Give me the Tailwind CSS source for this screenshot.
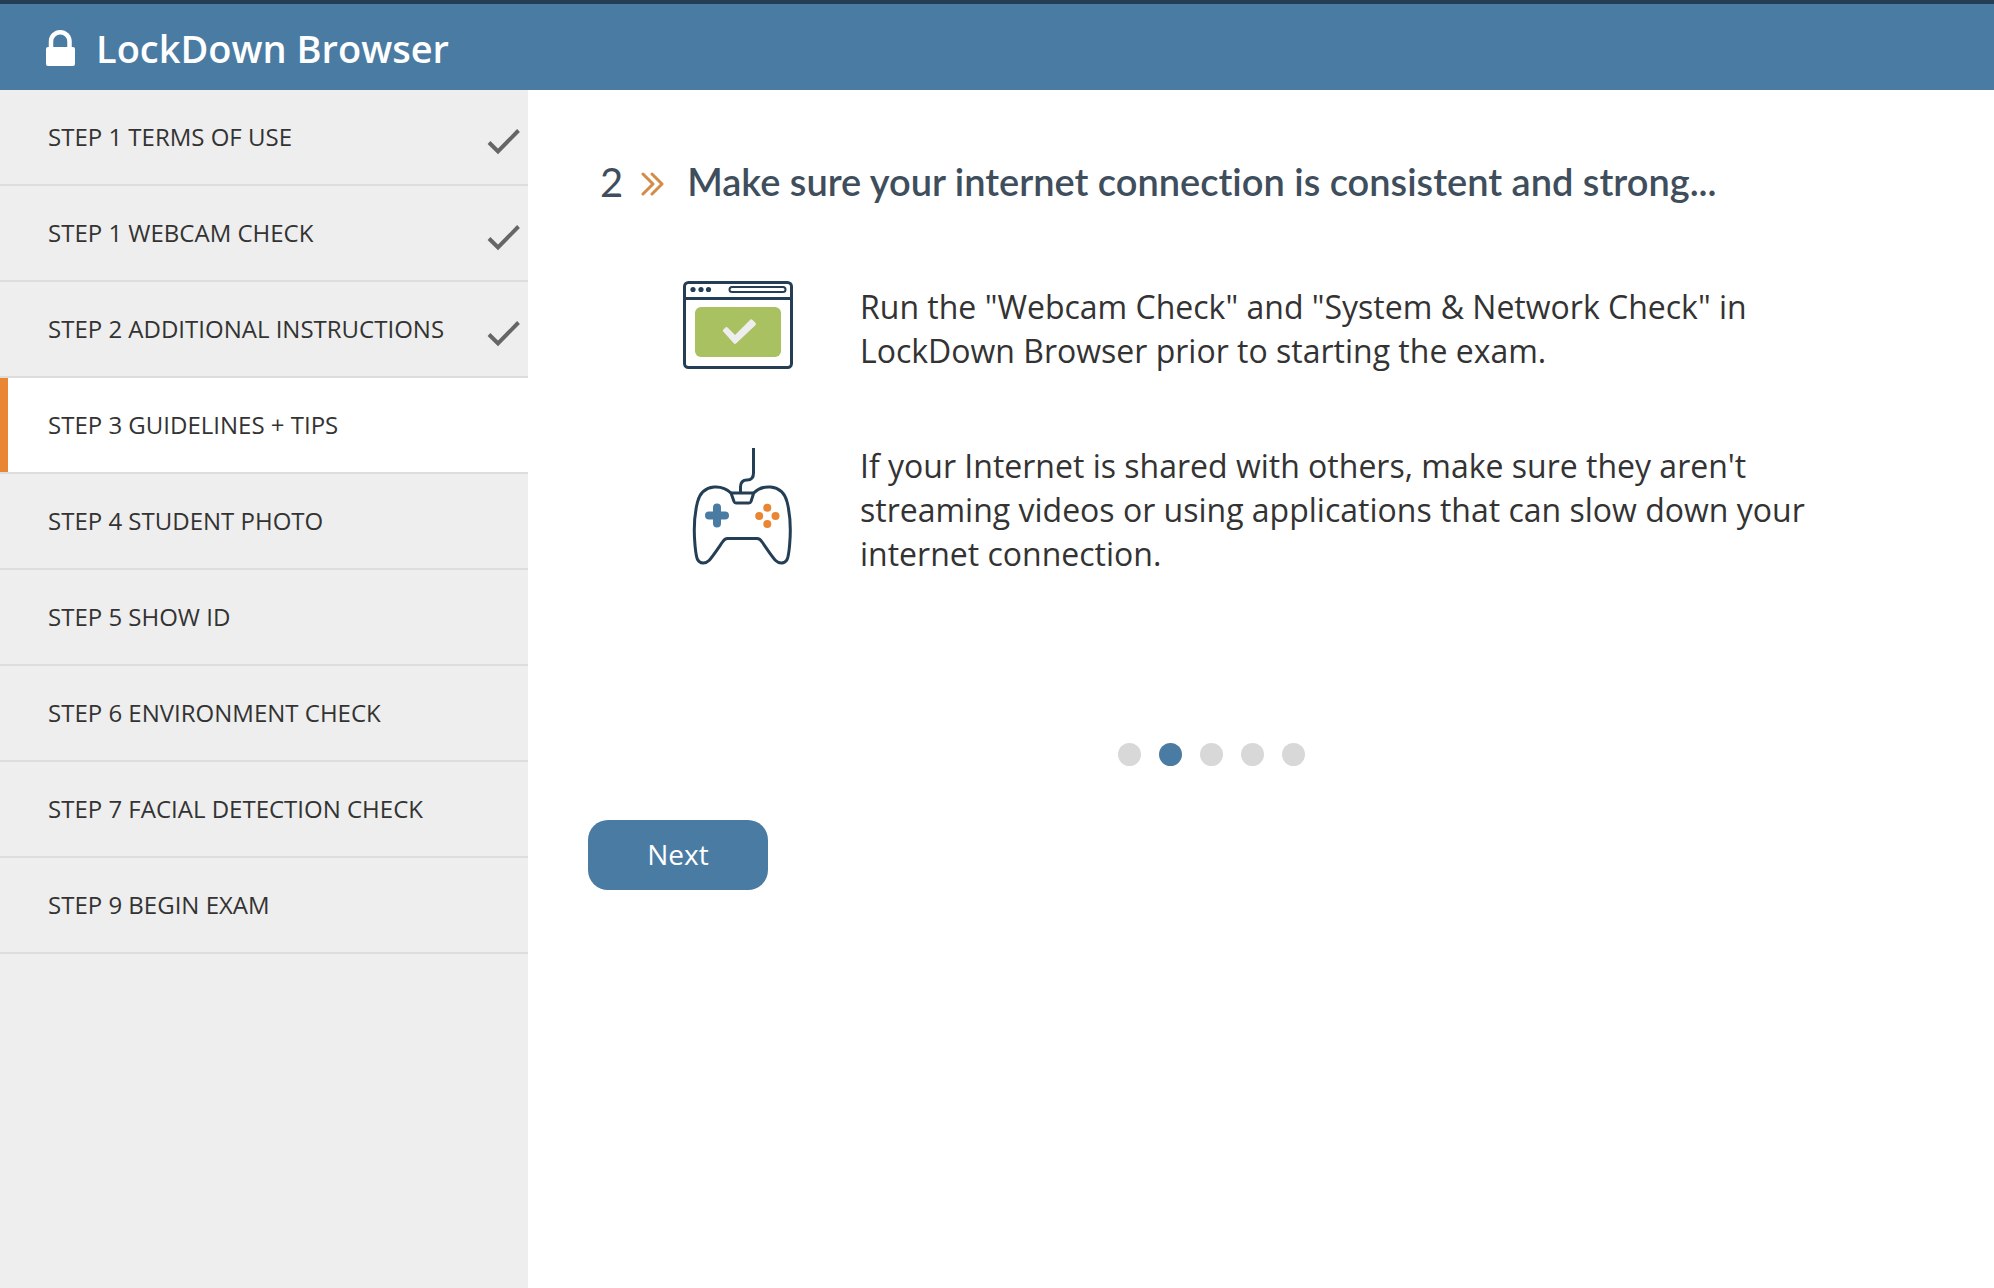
<!DOCTYPE html>
<html lang="en">
<head>
  <meta charset="UTF-8" />
  <meta name="viewport" content="width=device-width, initial-scale=1.0" />
  <title>LockDown Browser | Guidelines + Tips</title>
  <script src="https://cdn.jsdelivr.net/npm/@tailwindcss/browser@4"></script>
</head>
<body class="min-h-screen flex flex-col bg-white font-['Open_Sans',sans-serif] text-[#333333]">

  <!-- Header -->
  <header class="flex items-center gap-5 h-[90px] pl-[46px] pt-0.5 border-t-4 border-[#243f55] bg-[#4a7ba3] text-white">
    <svg class="w-[30px] h-9" viewBox="0 0 30 36" fill="none" aria-hidden="true">
      <path d="M5 17V11.500a9.200 9.200 0 0 1 18.500 0V17" stroke="currentColor" stroke-width="4.500" />
      <rect x="0" y="17" width="29" height="19" rx="2" fill="currentColor" />
    </svg>
    <span class="text-[38px] leading-[48px] font-semibold">LockDown Browser</span>
  </header>

  <div class="flex flex-1">

    <!-- Steps -->
    <nav class="w-[528px] shrink-0 bg-[#eeeeee]" aria-label="Steps">
      <ul class="text-[24px] leading-8">
        <li class="border-b-2 border-[#dddddd]">
          <a href="#" class="flex items-center justify-between h-[94px] pl-12">STEP 1 TERMS OF USE
            <svg class="size-12" viewBox="0 0 48 48" fill="none" stroke="#666666" stroke-width="4" role="img" aria-label="Done"><path d="M9 29.500l9 9 20.500-21" /></svg>
          </a>
        </li>
        <li class="border-b-2 border-[#dddddd]">
          <a href="#" class="flex items-center justify-between h-[94px] pl-12">STEP 1 WEBCAM CHECK
            <svg class="size-12" viewBox="0 0 48 48" fill="none" stroke="#666666" stroke-width="4" role="img" aria-label="Done"><path d="M9 29.500l9 9 20.500-21" /></svg>
          </a>
        </li>
        <li class="border-b-2 border-[#dddddd]">
          <a href="#" class="flex items-center justify-between h-[94px] pl-12">STEP 2 ADDITIONAL INSTRUCTIONS
            <svg class="size-12" viewBox="0 0 48 48" fill="none" stroke="#666666" stroke-width="4" role="img" aria-label="Done"><path d="M9 29.500l9 9 20.500-21" /></svg>
          </a>
        </li>
        <li class="border-b-2 border-[#dddddd]">
          <a href="#" aria-current="step" class="flex items-center h-[94px] pl-10 border-l-8 border-[#e98634] bg-white">STEP 3 GUIDELINES + TIPS</a>
        </li>
        <li class="border-b-2 border-[#dddddd]">
          <a href="#" class="flex items-center h-[94px] pl-12">STEP 4 STUDENT PHOTO</a>
        </li>
        <li class="border-b-2 border-[#dddddd]">
          <a href="#" class="flex items-center h-[94px] pl-12">STEP 5 SHOW ID</a>
        </li>
        <li class="border-b-2 border-[#dddddd]">
          <a href="#" class="flex items-center h-[94px] pl-12">STEP 6 ENVIRONMENT CHECK</a>
        </li>
        <li class="border-b-2 border-[#dddddd]">
          <a href="#" class="flex items-center h-[94px] pl-12">STEP 7 FACIAL DETECTION CHECK</a>
        </li>
        <li class="border-b-2 border-[#dddddd]">
          <a href="#" class="flex items-center h-[94px] pl-12">STEP 9 BEGIN EXAM</a>
        </li>
      </ul>
    </nav>

    <!-- Current tip -->
    <main class="flex-1 pt-[66px] pl-[60px] pr-40">
      <div class="flex items-center pl-3 text-[#3f4e5c] font-[Lato,sans-serif]">
        <span class="text-[40px] leading-[52px]">2</span>
        <svg class="w-6 h-6 ml-[18px] mt-1" viewBox="0 0 24 24" fill="none" stroke="#d58a45" stroke-width="3" stroke-linecap="round" stroke-linejoin="round" aria-hidden="true">
          <path d="M2 2l10 10L2 22M11 2l10 10-10 10" />
        </svg>
        <h1 class="ml-[22px] pb-0.5 text-[38px] leading-[50px] font-semibold [font-variant-ligatures:none]">Make sure your internet connection is consistent and strong...</h1>
      </div>

      <div class="mt-[73px] ml-[95px] flex items-start">
        <svg class="w-[110px] h-[88px] shrink-0" viewBox="0 0 110 88" fill="none" aria-hidden="true">
          <rect x="1.500" y="1.500" width="107" height="85" rx="4" stroke="#243f55" stroke-width="3" />
          <path d="M2 17.500h106" stroke="#243f55" stroke-width="3" />
          <circle cx="10" cy="8.500" r="2.600" fill="#243f55" />
          <circle cx="18" cy="8.500" r="2.600" fill="#243f55" />
          <circle cx="25.500" cy="8.500" r="2.600" fill="#243f55" />
          <rect x="46.500" y="6" width="56" height="5" rx="2.500" stroke="#243f55" stroke-width="2" />
          <rect x="12" y="26" width="86" height="50" rx="6" fill="#a9c160" />
          <path d="M40.200 50.500c-.6-.6-.6-1.200 0-1.800l2-2c.8-.8 1.800-.8 2.600 0l7.200 7.200 15-15c.8-.8 1.800-.8 2.600 0l2.800 2.800c.8.8.8 1.800 0 2.600L53.300 62.300c-.8.8-1.800.8-2.600 0z" fill="#eeeeee" />
        </svg>
        <p class="ml-[67px] mt-1 text-[32px] leading-[44px]">Run the "Webcam Check" and "System &amp; Network Check" in LockDown Browser prior to starting the exam.</p>
      </div>

      <div class="mt-[71px] ml-[95px] flex items-start">
        <svg class="w-[110px] h-[122px] shrink-0" viewBox="0 -4 110 122" fill="none" stroke="#243f55" stroke-width="3" aria-hidden="true">
          <path d="M70.500 0v25c0 5-3 7-6.500 7-4 0-6.500 2-6.500 7v6" />
          <path d="M48 45h22.700l-2.700 8.500c-.4 1-1 1.500-2 1.500h-13c-1 0-1.600-.5-2-1.500z" stroke-linejoin="round" />
          <path d="M48 45C43 40 37.500 38.500 31 39c-9 1-14.500 7-16.500 15-3 12-4 27-2.500 43 .8 8 1 11 2.500 14.500 2.500 4.500 8 4.500 11.500 1 3-3 9-12 13.500-18.500C41 91.500 42.500 90.500 44.500 90.500h29.600c2 0 3.500 1 5 3.500 4.500 6.500 10.500 15.500 13.500 18.500 3.500 3.500 9 3.500 11.500-1 1.500-3.500 1.700-6.500 2.500-14.500 1.500-16 .5-31-2.500-43-2-8-7.500-14-16.500-15-6.500-.5-12 1-16.900 6" />
          <path d="M34 59.500v16M26 67.500h16" stroke="#4a7ba3" stroke-width="8" stroke-linecap="round" />
          <g fill="#e98634" stroke="none">
            <circle cx="84.300" cy="59.800" r="4" />
            <circle cx="76.200" cy="68" r="4" />
            <circle cx="92.500" cy="68" r="4" />
            <circle cx="84.300" cy="76" r="4" />
          </g>
        </svg>
        <p class="ml-[67px] text-[32px] leading-[44px]">If your Internet is shared with others, make sure they aren't streaming videos or using applications that can slow down your internet connection.</p>
      </div>

      <div class="mt-[167px] flex justify-center gap-[18px]">
        <button type="button" aria-label="Tip 1" class="size-[23px] rounded-full bg-[#d8d8d8]"></button>
        <button type="button" aria-label="Tip 2" aria-current="true" class="size-[23px] rounded-full bg-[#4a7ba3]"></button>
        <button type="button" aria-label="Tip 3" class="size-[23px] rounded-full bg-[#d8d8d8]"></button>
        <button type="button" aria-label="Tip 4" class="size-[23px] rounded-full bg-[#d8d8d8]"></button>
        <button type="button" aria-label="Tip 5" class="size-[23px] rounded-full bg-[#d8d8d8]"></button>
      </div>

      <button type="button" class="mt-[54px] w-[180px] h-[70px] pb-0.5 rounded-[20px] bg-[#4a7ba3] text-white text-[28px] leading-9">Next</button>
    </main>
  </div>

</body>
</html>
